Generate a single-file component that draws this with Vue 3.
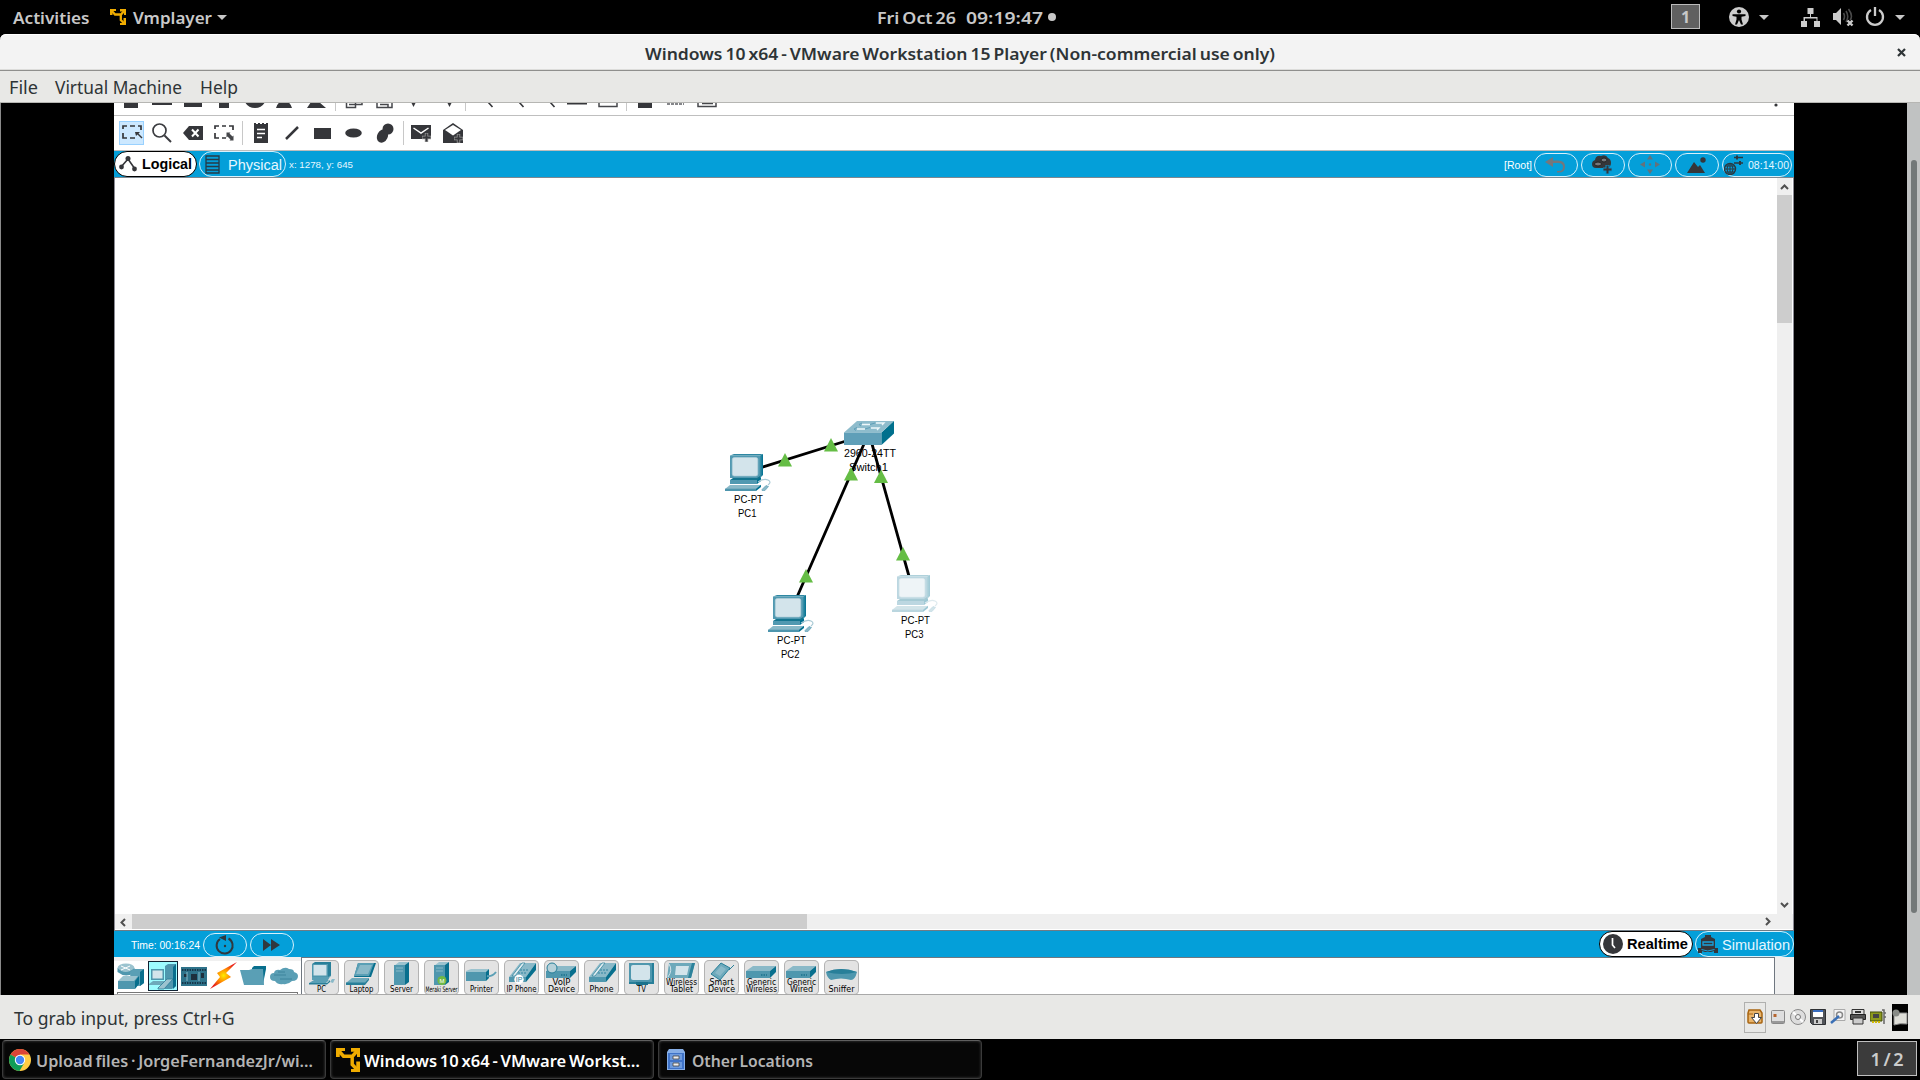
<script setup>
import { h } from 'vue'

// Single line of text fitted to a given width: w width, h row height, b baseline, s font size
const Fit = (p) =>
  h('svg', { width: p.w, height: p.h, style: { display: 'block', flex: 'none', overflow: 'visible' } }, [
    h('text', { x: 0, y: p.b, textLength: p.w, lengthAdjust: 'spacingAndGlyphs', 'font-size': p.s, fill: 'currentColor' }, p.t),
  ])
Fit.props = ['w', 'h', 'b', 's', 't']

const VmIcon = (p) =>
  h('svg', { width: p.size, height: p.size, viewBox: '0 0 16 16', style: { display: 'block', flex: 'none' } }, [
    h('path', { d: 'M0 0h6v2H2.500v4H0zM16 0v6h-2V2.500h-4V0zM16 16h-6v-2h3.500v-5h2.500z', fill: '#f0ac00' }),
    h('path', { d: 'M1.500 1.500L5 5.500H11L14.500 1.500M10.800 5.500V11L14.500 14.800', fill: 'none', stroke: '#f0ac00', 'stroke-width': 2.3 }),
  ])
VmIcon.props = ['size']

const menus = [
  { t: 'File', w: 29, gap: 9 },
  { t: 'Virtual Machine', w: 127, gap: 17 },
  { t: 'Help', w: 38, gap: 18 },
]
const pcs = [
  { x: 725, y: 454, name: 'PC1', o: 1 },
  { x: 768, y: 595, name: 'PC2', o: 1 },
  { x: 892, y: 575, name: 'PC3', o: 0.38 },
]
const lights = [[785, 453], [831, 438], [851, 467], [881, 469.5], [806, 569], [903, 547]]
const devices = [
  { k: 'pc', l: [['PC', 9]] },
  { k: 'laptop', l: [['Laptop', 24]] },
  { k: 'server', l: [['Server', 23]] },
  { k: 'meraki', l: [['Meraki Server', 32]] },
  { k: 'printer', l: [['Printer', 23]] },
  { k: 'ipphone', l: [['IP Phone', 30]] },
  { k: 'voip', l: [['VoIP', 18], ['Device', 27]] },
  { k: 'phone', l: [['Phone', 24]] },
  { k: 'tv', l: [['TV', 9]] },
  { k: 'tablet', l: [['Wireless', 31], ['Tablet', 23]] },
  { k: 'smart', l: [['Smart', 24], ['Device', 27]] },
  { k: 'box', l: [['Generic', 29], ['Wireless', 31]] },
  { k: 'box', l: [['Generic', 29], ['Wired', 23]] },
  { k: 'sniffer', l: [['Sniffer', 26]] },
]
</script>

<template>
  <div class="screen">
    <header class="top">
      <div class="side">
        <Fit class="act" :w="76.500" :h="34" :b="24" :s="16.300" t="Activities" />
        <VmIcon class="vmi" :size="16" />
        <Fit class="vmt" :w="79" :h="34" :b="24" :s="16.300" t="Vmplayer" />
        <svg class="tri" width="10" height="5"><path d="M0 0h10L5 5z" fill="#c8c8c8" /></svg>
      </div>
      <div class="clock">
        <Fit class="tight" :w="79" :h="34" :b="24" :s="16.300" t="Fri Oct 26" />
        <Fit class="tm" :w="77" :h="34" :b="24" :s="16.300" t="09:19:47" />
        <i class="dot"></i>
      </div>
      <div class="side right">
        <div class="ws">1</div>
        <svg class="i1" width="20" height="20" viewBox="0 0 20 20"><circle cx="10" cy="10" r="10" fill="#ccc" /><circle cx="10" cy="4.500" r="2.100" /><path d="M3.500 7.200h13v1.900l-4 .6v2.800l1.500 5h-2l-2-4.500-2 4.500H6l1.500-5V9.700l-4-.6z" /></svg>
        <svg class="i2" width="10" height="5"><path d="M0 0h10L5 5z" fill="#c8c8c8" /></svg>
        <svg class="i3" width="19" height="19" viewBox="0 0 19 19" fill="#ccc"><path d="M6.500 0h6v6H10v3h6.500v4H19v6h-6v-6h2.500v-2.500H4V13h2v6H0v-6h2.500V9H9V6H6.500z" /></svg>
        <svg class="i4" width="21" height="20" viewBox="0 0 21 20"><path d="M0 6h3l5-5v17l-5-5H0z" fill="#ccc" /><path d="M10.500 6q2 3.500 0 7M13 4q3.500 5.500 0 11M15.500 2q5 7 1.500 11" fill="none" stroke="#4a4a4a" stroke-width="1.600" /><path d="M14.500 13.500l5 5m0-5l-5 5" stroke="#ccc" stroke-width="2.400" /></svg>
        <svg class="i5" width="20" height="20" viewBox="0 0 20 20" fill="none" stroke="#ccc" stroke-width="2.300"><path d="M6 3A8 8 0 1 0 14 3M10 0v9" /></svg>
        <svg class="i6" width="10" height="5"><path d="M0 0h10L5 5z" fill="#c8c8c8" /></svg>
      </div>
    </header>

    <div class="titlewrap">
      <div class="title">
        <span></span>
        <Fit class="tight" :w="630" :h="36" :b="25.500" :s="16.300" t="Windows 10 x64 - VMware Workstation 15 Player (Non-commercial use only)" />
        <svg class="close" width="9" height="9"><path d="M1 1l7 7m0-7l-7 7" stroke="#2e3436" stroke-width="2.200" /></svg>
      </div>
    </div>
    <nav class="menu">
      <Fit v-for="m in menus" :key="m.t" :style="{ marginLeft: m.gap + 'px' }" :w="m.w" :h="31" :b="23" :s="17.5" :t="m.t" />
    </nav>

    <main class="body">
      <div class="black left"></div>
      <section class="app">
        <svg class="clip" width="1680" height="13" viewBox="114 103 1680 12" fill="#35363a">
          <path d="M124 102h14v6h-14zM152 102h20v3h-20zM184 102h18v5h-18zM219 102h10v6h-10zM245 102h20q-3 6-10 6t-10-6zM280 102h8q3 2 4 6h-16q1-4 4-6zM311 102h8l7 6h-19z" />
          <path d="M346.500 102v5.500h9v-5.500M349 104.500h13v-2.500M377 102v5.500h15v-5.500M380 104.500h8v3M599 102v4.500h18v-4.500M698 102v4.500h18v-4.500M702 103.500h11" fill="none" stroke="#46474b" stroke-width="1.500" />
          <path d="M411 102h5l-2.500 5zM447 102h5l-2.500 5zM638 102h14v6h-14zM567 102.500h20v2h-20z" />
          <path d="M667 104h17" stroke="#85868a" stroke-width="2" stroke-dasharray="3 1" />
          <path d="M488 102l4.500 5M519 102l4.500 5M550 102l4.500 5" stroke="#35363a" stroke-width="1.600" />
          <path d="M335 102h1v9h-1zM465 102h1v9h-1zM626 102h1v9h-1z" fill="#c8c8c8" /><circle cx="1776" cy="105" r="1.600" />
        </svg>
        <div class="tools">
          <div class="cell"><svg class="sel" width="25" height="24" viewBox="0 0 25 24"><path d="M4 8V5h4m3 0h5m3 0h3v4M4 12v5h4m3 0h5" fill="none" stroke="#35363a" stroke-width="1.700" /><path d="M16 11h5l-1.500 1.500 4 4-1 1-4-4L17 15z" fill="#35363a" /></svg></div>
          <div class="cell"><svg width="22" height="22" viewBox="0 0 22 22" fill="none" stroke="#3b3c40"><circle cx="8.500" cy="8.500" r="6.500" stroke-width="1.700" /><path d="M13.500 13.500l6.500 6.500" stroke-width="2" /></svg></div>
          <div class="cell"><svg width="20" height="14" viewBox="0 0 20 14"><path d="M0 7l6-7h14v14H6z" fill="#35363a" /><path d="M9 3.500l6.500 7m0-7L9 10.500" stroke="#fff" stroke-width="2" /></svg></div>
          <div class="cell"><svg width="22" height="20" viewBox="0 0 22 20"><path d="M2 6V3h4m3 0h4m3 0h4v4M2 10v5h4m3 0h4" fill="none" stroke="#35363a" stroke-width="1.700" /><path d="M13.500 9.500h4l-1 1 3 3 1-1v5h-4l1-1-3-3-1 1z" fill="#45464a" /></svg></div>
          <i class="sep"></i>
          <div class="cell"><svg width="14" height="20" viewBox="0 0 14 20"><path d="M0 0h2v1h2V0h2v1h2V0h2v1h2V0h2v20H0z" fill="#35363a" /><path d="M3 6.500h8M3 10.500h8M3 14.500h5" stroke="#fff" stroke-width="1.500" /></svg></div>
          <div class="cell"><svg width="14" height="14"><path d="M1 13L13 1" stroke="#35363a" stroke-width="2.500" /></svg></div>
          <div class="cell"><svg width="17" height="11"><path d="M0 0h17v11H0z" fill="#35363a" /></svg></div>
          <div class="cell"><svg width="17" height="10"><ellipse cx="8.500" cy="5" rx="8.300" ry="4.600" fill="#35363a" /></svg></div>
          <div class="cell"><svg width="18" height="20" viewBox="0 0 18 20" fill="#35363a"><ellipse cx="12" cy="6" rx="5.500" ry="5.500" /><ellipse cx="6.500" cy="13" rx="5.300" ry="7" transform="rotate(25 6.500 13)" /></svg></div>
          <i class="sep"></i>
          <div class="cell"><svg class="mail" width="22" height="17" viewBox="0 0 22 17"><path d="M0 0h20v14H0z" fill="#35363a" /><path d="M2.500 3l7.500 5 7.500-5" fill="none" stroke="#fff" stroke-width="1.500" /><path d="M15.500 8v9M11 12.500h9" stroke="#999" stroke-width="3.400" /><path d="M15.500 8.500v8M11.500 12.500h8" stroke="#35363a" stroke-width="1.800" /></svg></div>
          <div class="cell"><svg width="20" height="21" viewBox="0 0 20 21"><path d="M0 7l10-7 10 7v13H0z" fill="#35363a" /><path d="M2 7l8-5 8 5-8 5.500z" fill="#fff" /><path d="M15.500 11v9M11 15.500h9" stroke="#999" stroke-width="3.400" /><path d="M15.500 11.500v8M11.500 15.500h8" stroke="#35363a" stroke-width="1.800" /></svg></div>
        </div>

        <div class="blue views">
          <div class="pill on logical">
            <svg width="18" height="16" viewBox="0 0 18 16"><path d="M2 11L9 3l7 10" fill="none" stroke="#35363a" stroke-width="1.600" /><circle cx="2.500" cy="11" r="2.400" fill="#35363a" /><circle cx="9" cy="2.500" r="2.500" fill="#35363a" /><circle cx="15.500" cy="13" r="2.400" fill="#35363a" /></svg>
            <Fit :w="50" :h="24" :b="17" :s="15.500" t="Logical" />
          </div>
          <div class="pill physical">
            <svg width="15" height="19" viewBox="0 0 15 19" fill="none" stroke="#263b47" stroke-width="1.300"><path d="M1 1h13v17H1zM1 4.500h13M1 8h13M1 11.500h13M1 15h13" /></svg>
            <Fit :w="54" :h="24" :b="18" :s="15.500" t="Physical" />
          </div>
          <Fit class="xy" :w="64" :h="26" :b="17" :s="9.800" t="x: 1278, y: 645" />
          <Fit class="root" :w="28" :h="26" :b="17.500" :s="10.800" t="[Root]" />
          <div class="pill p44"><svg width="22" height="16" viewBox="0 0 22 16"><path d="M0 5l8-5v3.500h5q7 0 7 6t-6 6h-2v-1.500h2q4 0 4-4t-5-4H8V10z" fill="#74777c" /></svg></div>
          <div class="pill p44"><svg width="22" height="20" viewBox="0 0 22 20"><path d="M4 13q-4 0-4-4 0-3 3-4 1-5 6-4 5-2 7 2 3 1 3 5t-4 5z" fill="#35363a" /><ellipse cx="6" cy="9" rx="3.500" ry="2" fill="#74777c" stroke="#222" /><ellipse cx="12" cy="5" rx="3" ry="2" fill="#74777c" stroke="#222" /><path d="M15.500 10v9M11 14.500h9" stroke="#0a8fc8" stroke-width="4" /><path d="M15.500 10.500v8M11.500 14.500h8" stroke="#35363a" stroke-width="2" /></svg></div>
          <div class="pill p44"><svg width="20" height="19" viewBox="0 0 20 19" fill="#65727a"><path d="M10 0l3 4.500H7zM10 19l-3-4.500h6zM0 9.500l5-3v6zM20 9.500l-5-3v6z" /><circle cx="10" cy="9.500" r="1.200" /></svg></div>
          <div class="pill p44"><svg width="20" height="16" viewBox="0 0 20 16" fill="#35363a"><path d="M0 16l7-11 4 5 2-2 5 8z" /><circle cx="16" cy="3" r="2.700" /></svg></div>
          <div class="pill env">
            <svg width="20" height="20" viewBox="0 0 20 20" fill="none" stroke="#2b3840"><circle cx="6" cy="14" r="5.500" stroke-width="1.400" /><path d="M6 8v12M0 14h12M1.500 11h9M1.500 17h9M6 8q-6 6 0 12M6 8q6 6 0 12" /><path d="M10 2.500h9M10 8h9" stroke-width="1.500" /><path d="M13 .5v4M16 6v4" stroke-width="2" /></svg>
            <Fit :w="41" :h="23" :b="15.500" :s="11" t="08:14:00" />
          </div>
        </div>

        <div class="work">
          <svg class="canvas" width="1662" height="736" viewBox="115 178 1662 736">
            <defs>
              <linearGradient id="side" x1="0" x2="1"><stop offset="0" stop-color="#3d93aa" /><stop offset="1" stop-color="#007091" /></linearGradient>
            </defs>
            <g font-size="10.800" fill="#000">
              <text x="844" y="456.500" textLength="52" lengthAdjust="spacingAndGlyphs">2960-24TT</text>
              <text x="849" y="470.500" textLength="39" lengthAdjust="spacingAndGlyphs">Switch1</text>
            </g>
            <path d="M758 468.500L846 441M864 444L797 597M872 444L909.500 578" stroke="#000" stroke-width="2.800" />
            <path v-for="(l, i) in lights" :key="i" :d="`M${l[0]} ${l[1]}l7 13.500h-14z`" fill="#65bd45" />
            <path d="M844 432.500L857 421h37l-13 11.500z" fill="#8ebccc" />
            <path d="M844 432.500h37.500V445H844z" fill="#5f9fb8" />
            <path d="M881.500 432.500L894 421v12.500L881.500 445z" fill="#00708d" />
            <path d="M862 424.500h8M876 423h8l-2 2M857 429h8M871 428h8l-2 2" fill="none" stroke="#eef7fa" stroke-width="1.300" />
            <path d="M862 423l-3 1.500 2 1.500M857 427.500l-3 1.500 2 1.500M870 424.500l5-1.500M865 429l5-1.500" fill="none" stroke="#5f9fb8" />
            <g v-for="p in pcs" :key="p.name" :transform="`translate(${p.x} ${p.y})`">
              <path d="M5 1.500L9 0h29v21l-6 4H5z" fill="#fff" />
              <g :opacity="p.o">
                <path d="M5 1.500L9 0h29l-3 1.500z" fill="#2f87a2" />
                <path d="M5 1.500h30V24H5z" fill="#5199b1" />
                <path d="M35 1.500L38 0v21l-3 3z" fill="url(#side)" />
                <rect x="7.300" y="3.500" width="25.500" height="18.500" rx="2" fill="#d3e4eb" stroke="#b3d0da" stroke-width=".7" />
                <path d="M8 24h24l3-2v3l-4 4H5v-3z" fill="#14758f" />
                <path d="M5 26h27v4H5z" fill="#5199b1" /><path d="M32 26l4-3v4l-4 3z" fill="#007091" />
                <path d="M5 31h31l-5 4H0z" fill="#8ab9c8" /><path d="M0 34.700h31V37H0z" fill="#4d95ad" /><path d="M31 34.700l5-4V33l-5 4z" fill="#007091" />
                <path d="M33 28q6-4 10-2 4 2 0 5" fill="none" stroke="#a9cad5" stroke-width="1.200" /><path d="M37 35.500l4-4 2.500 1-3.500 4h-3z" fill="#8ab9c8" stroke="#559bb3" stroke-width=".6" />
              </g>
              <g font-size="10.800" fill="#000">
                <text x="9" y="48.500" textLength="29" lengthAdjust="spacingAndGlyphs">PC-PT</text>
                <text x="13" y="62.500" textLength="18.500" lengthAdjust="spacingAndGlyphs">{{ p.name }}</text>
              </g>
            </g>
          </svg>
          <div class="vs">
            <svg width="9" height="6"><path d="M1 5l3.500-3.500L8 5" fill="none" stroke="#505050" stroke-width="2" /></svg>
            <i class="vthumb"></i>
            <svg width="9" height="6"><path d="M1 1l3.500 3.500L8 1" fill="none" stroke="#505050" stroke-width="2" /></svg>
          </div>
        </div>
        <div class="hs">
          <div class="hb"><svg width="6" height="9"><path d="M5 1L1.500 4.500 5 8" fill="none" stroke="#505050" stroke-width="2" /></svg></div>
          <i class="hthumb"></i>
          <svg class="ha" width="6" height="9"><path d="M1 1l3.500 3.500L1 8" fill="none" stroke="#505050" stroke-width="2" /></svg>
        </div>

        <div class="blue time">
          <Fit class="tt" :w="69" :h="26" :b="18" :s="11" t="Time: 00:16:24" />
          <div class="pill p44"><svg width="20" height="20" viewBox="0 0 20 20" fill="none" stroke="#30383e" stroke-width="2"><path d="M13.500 3.500A8 8 0 1 1 5 4" /><circle cx="10" cy="11" r="1.200" fill="#30383e" stroke="none" /><path d="M4 2.500L11 0v6z" fill="#30383e" stroke="none" /></svg></div>
          <div class="pill p44"><svg class="ff" width="17" height="12" viewBox="0 0 17 12" fill="#30383e"><path d="M0 0l8 6-8 6zM8 0l9 6-9 6z" /></svg></div>
          <div class="pill on real">
            <svg width="20" height="20"><circle cx="10" cy="10" r="10" fill="#35363a" /><path d="M9.500 4v7l2.500 3" fill="none" stroke="#fff" stroke-width="1.700" /></svg>
            <Fit :w="61" :h="24" :b="17" :s="15.300" t="Realtime" />
          </div>
          <div class="pill sim">
            <svg width="20" height="18" viewBox="0 0 20 18"><path d="M7 0h6v2l4 2v9h3v5h-4v-2l-3 1H7l-3-1v2H0v-5h3V4l4-2z" fill="#35363a" /><path d="M5 7h10v3H5z" fill="#35363a" stroke="#1aa2dc" stroke-width="1.300" /><path d="M3.500 14.500q6 3 13 0" fill="none" stroke="#1aa2dc" /></svg>
            <Fit :w="68" :h="24" :b="17.500" :s="15.500" t="Simulation" />
          </div>
        </div>

        <div class="devs">
          <div class="cats">
            <div class="catrow">
              <svg width="28" height="27" viewBox="0 0 28 27"><ellipse cx="9" cy="5" rx="8.500" ry="4.500" fill="#9bc3cf" /><path d="M.5 5q8 8 17 0v4q-8 7-17 0z" fill="#4f97ae" /><path d="M13 9l4-3h10v14l-4 3h-9z" fill="#5a9fb5" /><path d="M23 9l4-3v14l-4 3z" fill="#086f8d" /><path d="M1 18l5-5h15l-4 5z" fill="#9bc3cf" /><path d="M1 18h17v8H1z" fill="#4f97ae" /><path d="M18 18l4-5v8l-4 5z" fill="#086f8d" /><path d="M4 3l9 4M13 3L4 7" stroke="#fff" /></svg>
              <svg class="csel" width="30" height="30" viewBox="0 0 30 30"><path d="M17 5l3-2h8v22l-4 3h-7z" fill="#4f97ae" /><path d="M25 6l3-3v22l-3 3z" fill="#086f8d" /><path d="M3 8h13v11H3z" fill="#4f97ae" /><path d="M4.500 9.500h10v8h-10z" fill="#d3e4eb" /><path d="M1 23l4-3h12l-3 4H1z" fill="#6da9bb" /><path d="M10 27l9-9h6l-9 10h-6z" fill="#9bc3cf" stroke="#287d97" stroke-width=".8" /></svg>
              <svg width="26" height="19" viewBox="0 0 26 19"><path d="M0 0h26v19H0z" fill="#2e728a" /><path d="M1 3h24M1 16h24" stroke="#17364a" stroke-width="2" stroke-dasharray="1.500 1" /><path d="M10 7h6v6h-6zM3 7h3v3H3zM20 6h3v5h-3z" fill="#1d2f3d" /><path d="M6 5v9M18 5v9" stroke="#8ab9c8" /></svg>
              <svg width="28" height="28" viewBox="0 0 28 28"><defs><radialGradient id="bolt"><stop offset="0" stop-color="#ffec00" /><stop offset=".5" stop-color="#ff8800" /><stop offset="1" stop-color="#e8201a" /></radialGradient></defs><path d="M28 0L8 11l3 4L1 27l21-12-5-4z" fill="url(#bolt)" /></svg>
              <svg width="27" height="20" viewBox="0 0 27 20"><path d="M12 2l2-2h12v3l-3 15H12z" fill="#086f8d" /><path d="M0 4h9l3-1h11l1 16H4z" fill="#5a9fb5" /></svg>
              <svg width="28" height="18" viewBox="0 0 28 18"><path d="M5 14q-5 0-5-4t4-4q1-4 6-3 5-4 9-1 5 0 5 3 4 1 4 4 0 5-6 5-4 4-9 3-5 1-8-3z" fill="#5a9fb5" /><path d="M4 8h12M8 5h7M10 12h12" stroke="#3c849c" /></svg>
            </div>
            <div class="sub"></div>
          </div>
          <div class="list">
            <div v-for="(d, i) in devices" :key="i" class="tile">
              <svg width="35" height="35" viewBox="0 0 35 35">
                <g v-if="d.k === 'pc'"><path d="M8 4l3-2h16v14l-4 2H8z" fill="#287f99" /><path d="M8 4h16v13H8z" fill="#4f97ae" /><path d="M9.500 5h13v10.500h-13z" fill="#d3e4eb" /><path d="M8 17h16l3-2-3 5H8zM5 23l5-3h15l-3 3z" fill="#5a9fb5" /><path d="M5 23h18l3-3v2l-3 2.500H5z" fill="#287f99" /><path d="M26 22l2-3h3l-2 4z" fill="#8ab9c8" /></g>
                <g v-else-if="d.k === 'laptop'"><path d="M14 3h18l-5 14H10z" fill="#086f8d" /><path d="M14 3h16l-5 13H10z" fill="#5a9fb5" /><path d="M16 5h12l-4 9H12z" fill="#8ab9c8" /><path d="M8 18h17l-4 5H2z" fill="#6da9bb" /><path d="M2 22.500h19l4-4.500v2l-4 5H2z" fill="#287f99" /></g>
                <g v-else-if="d.k === 'server' || d.k === 'meraki'"><path d="M10 6l5-4h10l-5 4z" fill="#9bc3cf" /><path d="M10 5h11v20H10z" fill="#4f97ae" /><path d="M21 5l4-3v20l-4 3z" fill="#086f8d" /><path d="M12 8h7M12 11h7" stroke="#8ab9c8" /><g v-if="d.k === 'meraki'"><circle cx="18" cy="20.500" r="4.500" fill="#70b944" /><text x="18" y="22.700" font-size="6" text-anchor="middle" fill="#fff">M</text></g></g>
                <g v-else-if="d.k === 'printer'"><path d="M2 11l5-2h18l-3 4H2z" fill="#9bc3cf" /><path d="M2 12h20v9H2z" fill="#4f97ae" /><path d="M22 12l3-3v9l-3 3z" fill="#086f8d" /><path d="M23 16q5 1 9-4" fill="none" stroke="#5a9fb5" stroke-width="2" /></g>
                <g v-else-if="d.k === 'ipphone' || d.k === 'phone'"><path d="M5 17L16 3h16L22 17z" fill="#8ab9c8" /><path d="M5 17h17v5H5z" fill="#4f97ae" /><path d="M22 17L32 3v7L22 22z" fill="#086f8d" /><path d="M8 16L18 3h3L11 16z" fill="#e1edf1" stroke="#287f99" stroke-width=".7" /><path d="M16 10h9M14 13h9" stroke="#4f97ae" stroke-width="1.500" stroke-dasharray="2 1" /><g v-if="d.k === 'ipphone'"><circle cx="15" cy="19.500" r="4.700" fill="#fff" /><text x="15" y="22" font-size="7" text-anchor="middle" fill="#287f99">IP</text></g></g>
                <g v-else-if="d.k === 'tv'"><path d="M5 3h25v21H5z" fill="#287f99" /><path d="M5 3h23v19H5z" fill="#4f97ae" /><rect x="7" y="5" width="19" height="15" rx="2" fill="#d3e4eb" /><path d="M12 22h12v3H12z" fill="#1b728c" /></g>
                <g v-else-if="d.k === 'tablet'"><path d="M5 3h26l-4 15H3z" fill="#6da9bb" /><path d="M12 6h13l-2 9H11z" fill="#d3e4eb" /><path d="M28 3h3l-4 15h-3z" fill="#2d829b" /><path d="M5 4q4 6-1 13" fill="none" stroke="#d3e4eb" /></g>
                <g v-else-if="d.k === 'smart'"><path d="M17 3l9 5-10 12-9-6z" fill="#6da9bb" stroke="#287f99" /><path d="M17 6l5 3-6 7-5-3z" fill="#8ab9c8" /><path d="M25 10l5-5" stroke="#287f99" /></g>
                <g v-else-if="d.k === 'box' || d.k === 'voip'"><path d="M2 11l7-5h23l-6 5z" fill="#8ab9c8" /><path d="M2 11h24v7H2z" fill="#4f97ae" /><path d="M26 11l6-5v6l-6 6z" fill="#086f8d" /><path d="M17 15h6" stroke="#1b728c" stroke-width="1.500" stroke-dasharray="1.500 1" /><circle v-if="d.k === 'voip'" cx="8" cy="8" r="5" fill="#b7d1d9" stroke="#287f99" /></g>
                <g v-else><path d="M2 12q15-6 31 0-2 8-6 8-10-3-20 0-4-2-5-8z" fill="#4f97ae" /><path d="M2 12q15-6 31 0-15 4-31 0z" fill="#287f99" /></g>
                <text v-for="(l, n) in d.l" :key="n" :x="17.5 - l[1] / 2" :y="31.500 - (d.l.length - 1 - n) * 7" :textLength="l[1]" lengthAdjust="spacingAndGlyphs" :class="['lab', { narrow: l[0].length > 9 }]">{{ l[0] }}</text>
              </svg>
            </div>
          </div>
          <div class="rest"></div>
        </div>
      </section>
      <div class="black right2"></div>
      <div class="oscroll"><i></i></div>
    </main>

    <footer class="status">
      <Fit class="grab" :w="220.500" :h="43" :b="29.500" :s="17.5" t="To grab input, press Ctrl+G" />
      <div class="sicons">
        <div class="boxed"><svg width="16" height="16" viewBox="0 0 16 16"><path d="M2 1h11l2 3v9q0 1-1 1H2q-1 0-1-1V4z" fill="#e9b46a" stroke="#a86411" stroke-width="1.500" /><path d="M1 5h5" stroke="#a86411" /><path d="M7.500 4.500h4v4h3L9.500 14.500 4.500 8.500h3z" fill="#fff" stroke="#444" /></svg></div>
        <svg width="16" height="16" viewBox="0 0 16 16"><rect x="1.500" y="1.500" width="13" height="13" rx="1" fill="#dedede" stroke="#888" /><path d="M3.500 5h3v3h-3z" fill="#b5652f" /><path d="M2 13h12" stroke="#999" stroke-width="2" /></svg>
        <svg width="16" height="16" viewBox="0 0 16 16"><circle cx="8" cy="8" r="7.500" fill="#ddd" stroke="#888" /><path d="M8 8L3 3M8 8l5 5" stroke="#fff" stroke-width="2" /><circle cx="8" cy="8" r="2.500" fill="#eee" stroke="#777" /></svg>
        <svg width="16" height="16" viewBox="0 0 16 16"><path d="M.5.500h15v15h-13l-2-2z" fill="#515459" stroke="#2e3033" /><path d="M3 1h10v7H3z" fill="#fff" /><path d="M3 1h10v2H3z" fill="#3a6ec0" /><path d="M4 10h8v5H4z" fill="#ccc" /><path d="M6 11h2v3H6z" fill="#444" /></svg>
        <svg width="16" height="16" viewBox="0 0 16 16"><path d="M4 .5h11v11H4z" fill="#f4f4f4" stroke="#aaa" /><circle cx="9.500" cy="6" r="3" fill="none" stroke="#888" stroke-width="1.500" /><path d="M1 14l8-7" stroke="#3b70b5" stroke-width="2.500" /></svg>
        <svg width="16" height="16" viewBox="0 0 16 16"><path d="M2 .5h12v5H2z" fill="#ddd" stroke="#333" /><path d="M5 3h6" stroke="#333" stroke-width="2" /><path d="M.5 5.500h15v5H.5z" fill="#555" stroke="#222" /><path d="M3 9h10v6H3z" fill="#ccc" stroke="#333" /></svg>
        <svg width="16" height="16" viewBox="0 0 16 16"><path d="M0 3h12v9H0z" fill="#8d9a1d" stroke="#404c0a" /><path d="M3 5h6v4H3z" fill="#454545" /><path d="M2 13h9" stroke="#d2b900" stroke-width="2" stroke-dasharray="2 1" /><path d="M12 1h2v14M14 4h2M14 8h2" fill="none" stroke="#666" stroke-width="1.500" /></svg>
        <div class="note"><svg width="16" height="17" viewBox="0 0 16 17"><path d="M2 4h13v11q-7-1-13 1z" fill="#deded8" stroke="#888" /><circle cx="4" cy="4" r="3.500" fill="#888b87" /></svg></div>
      </div>
    </footer>

    <div class="task">
      <div class="tb">
        <svg class="chrome" width="22" height="22" viewBox="0 0 22 22"><circle cx="11" cy="11" r="11" fill="#fc4" /><path d="M11 11L1.500 5.500A11 11 0 0 1 20.500 5.500H11z" fill="#db4437" /><path d="M1.500 5.500A11 11 0 0 0 10.500 22L15.500 13.500 11 11z" fill="#0f9d58" /><circle cx="11" cy="11" r="5.200" fill="#fff" /><circle cx="11" cy="11" r="4.200" fill="#4285f4" /></svg>
        <Fit class="tight" :w="277" :h="39" :b="26.500" :s="16.300" t="Upload files · JorgeFernandezJr/wi…" />
      </div>
      <div class="tb active">
        <VmIcon class="vbig" :size="24" />
        <Fit class="tight" :w="276" :h="39" :b="26.500" :s="16.300" t="Windows 10 x64 - VMware Workst…" />
      </div>
      <div class="tb">
        <svg class="cab" width="18" height="21" viewBox="0 0 18 21"><path d="M2 0h14l2 3v18H0V3z" fill="#86aee6" /><path d="M1 4h16v16H1z" fill="#3f73c8" /><path d="M3 5h12v6H3zM3 13h12v6H3z" fill="#6c9ade" /><path d="M6 7h6v3H6zM6 14h6v3H6z" fill="#eee" stroke="#444" stroke-width=".8" /></svg>
        <Fit class="tight" :w="121" :h="39" :b="26.500" :s="16.300" t="Other Locations" />
      </div>
      <div class="pager">1 / 2</div>
    </div>
  </div>
</template>

<style>
body { background: #000; overflow: hidden; }
</style>
<style scoped>
.screen { width: 1920px; height: 1080px; display: flex; flex-direction: column; background: #000; font-family: "Noto Sans", sans-serif; overflow: hidden; }
svg { display: block; flex: none; }
* { box-sizing: border-box; }
.tight { word-spacing: -1.500px; }
.top { height: 34px; display: flex; color: #c8c8c8; font-weight: 600; flex: none; align-items: center; }
.side { width: 877px; display: flex; align-items: center; padding-left: 12.500px; }
.vmi { margin-left: 21px; }
.vmt { margin-left: 7px; }
.tri { margin-left: 5px; }
.clock { display: flex; width: 179px; align-items: center; }
.tm { margin-left: 10px; }
.dot { width: 8px; height: 8px; border-radius: 50%; background: #c8c8c8; margin-left: 5px; }
.side.right { width: 864px; justify-content: flex-end; padding: 0 15px 0 0; }
.ws { width: 29px; height: 25px; border: 1px solid #bbb; background: #606060; text-align: center; font-size: 16px; line-height: 24px; font-weight: 700; margin-top: -1px; }
.i1 { margin-left: 29px; }
.i2 { margin-left: 10px; }
.i3 { margin-left: 32px; }
.i4 { margin-left: 13px; }
.i5 { margin-left: 11px; }
.i6 { margin-left: 10px; }
.titlewrap { height: 37px; flex: none; }
.title { height: 37px; border-radius: 6px 6px 0 0; background: #f3f3f3; border-bottom: 1px solid #8f8f8d; box-shadow: inset 0 -1px #dcdcda, inset 0 1px #fff; color: #2e3436; font-weight: 600; display: flex; align-items: center; justify-content: space-between; padding-right: 14px; }
.title span { width: 636px; }
.close { margin-left: 613px; }
.menu { height: 32px; flex: none; background: #e8e8e6; border-bottom: 1px solid #b6b6b3; display: flex; color: #2e3436; }
.body { height: 892px; flex: none; display: flex; border-left: 1px solid #8a8a8a; }
.black { background: #000; }
.left { width: 113px; }
.app { width: 1680px; background: #fff; display: flex; flex-direction: column; font-family: "Liberation Sans", sans-serif; }
.right2 { width: 113px; }
.oscroll { width: 13px; background: #c0c2c2; padding: 57px 0 0 4px; }
.oscroll i { display: block; width: 6px; height: 753px; border-radius: 3px; background: #737878; }
.clip { height: 13px; border-bottom: 1px solid #bfbfbf; overflow: hidden; }
.tools { height: 35px; padding-left: 1px; display: flex; align-items: center; border-bottom: 1px solid #bdbdbd; }
.cell { width: 31px; height: 34px; display: flex; align-items: center; justify-content: center; }
.sel { background: #cce8ff; outline: 1px solid #99d1ff; outline-offset: -1px; margin-left: 1px; }
.sep { width: 1px; height: 24px; background: #c8c8c8; margin: 0 2.500px; }
.blue { background: #049fd9; display: flex; align-items: center; color: #fff; flex: none; }
.views { height: 27px; border-bottom: 1px solid #7d8790; }
.pill { border: 1px solid #d7f1fc; border-radius: 13px; height: 24px; display: flex; align-items: center; justify-content: center; gap: 5px; flex: none; color: #e6f7ff; }
.pill.on { background: #fff; color: #000; border: 1px solid #000; height: 26px; font-weight: 700; }
.logical { width: 83px; padding-right: 1px; }
.physical { width: 87px; margin-left: 2px; height: 26px; gap: 8px; padding-left: 1px; }
.xy { margin-left: 3px; color: #e6f7ff; }
.root { margin-left: auto; margin-right: 2px; }
.p44 { width: 44px; margin-right: 3px; margin-top: 1px; }
.env { width: 70px; margin-right: 2px; gap: 4px; margin-top: 1px; padding-right: 1px; }
.work { height: 736px; display: flex; border-left: 1px solid #8a8a93; border-right: 1px solid #8a8a93; }
.canvas { width: 1662px; }
.vs { width: 15px; background: #efefef; display: flex; flex-direction: column; align-items: center; padding: 6px 0 6px; }
.vthumb { width: 15px; height: 128px; background: #cdcdcd; margin-top: 5px; margin-bottom: auto; }
.hs { height: 17px; background: #efefef; border-left: 1px solid #8a8a93; border-right: 1px solid #8a8a93; border-bottom: 1px solid #6f7b85; box-shadow: inset 0 -1px #fff; display: flex; }
.hb { width: 17px; display: flex; align-items: center; justify-content: center; padding-right: 2px; }
.hthumb { width: 675px; height: 15px; background: #cdcdcd; }
.ha { margin: 3px 0 0 auto; margin-right: 22px; }
.time { height: 26px; padding-left: 17px; }
.tt { margin-right: 3px; }
.ff { margin-right: 2px; }
.real { width: 94px; margin-left: auto; gap: 4px; padding-right: 2px; }
.sim { width: 99px; margin: 0 0 0 2px; gap: 4px; height: 26px; padding-right: 2px; }
.devs { height: 38px; display: flex; border-bottom: 1px solid #a9a9a9; overflow: hidden; background: #fff; }
.cats { width: 187px; padding: 4px 3px 0; border-top: 0; box-shadow: inset 0 4px #f0f0f0; }
.catrow { display: flex; height: 30px; align-items: center; justify-content: space-between; }
.csel { background: #9dfbff; outline: 1px solid #123; outline-offset: -1px; }
.sub { border: 1px solid #777; height: 8px; margin-top: 1px; }
.list { border: 1px solid #6f7780; border-bottom: 0; width: 1474px; height: 40px; display: flex; gap: 5px; padding: 2px 0 0 2px; }
.tile { width: 35px; height: 35px; border-radius: 5px; background: #e3e3e3; box-shadow: inset 0 0 0 1px #b3b3b3; flex: none; }
.lab { font-family: "DejaVu Sans", sans-serif; font-size: 8px; fill: #000; }
.lab.narrow { font-family: "DejaVu Sans Condensed", "DejaVu Sans", sans-serif; font-size: 7.500px; }
.rest { flex: 1; background: #efefef; }
.status { height: 44px; flex: none; background: #e8e8e6; display: flex; justify-content: space-between; color: #2e3436; }
.grab { margin-left: 14px; }
.sicons { display: flex; align-items: center; gap: 4px; padding-right: 12px; height: 44px; }
.boxed { width: 22px; height: 31px; border: 1px solid #b0b0ae; display: flex; align-items: center; justify-content: center; }
.note { width: 16px; height: 27px; background: #000; display: flex; align-items: center; margin-left: 2px; }
.task { height: 41px; display: flex; gap: 4px; padding: 1px 3px 0 2px; background: #000; font-weight: 600; color: #b4b4b4; }
.tb { width: 324px; height: 39px; background: #070707; border: 1px solid #3a3a3a; border-top-color: #606060; border-radius: 4px; box-shadow: inset 0 0 3px #444; display: flex; align-items: center; flex: none; }
.active { color: #fff; }
.chrome { margin: 0 5px 0 6px; }
.vbig { margin: 0 4px 0 5px; }
.cab { margin: 0 7px 0 8px; }
.pager { width: 60px; height: 35px; margin-left: auto; margin-top: 1px; background: #3b3b3b; border: 1px solid #c0c0c0; color: #ccc; font-size: 18px; line-height: 34px; text-align: center; word-spacing: -2px; }
</style>
